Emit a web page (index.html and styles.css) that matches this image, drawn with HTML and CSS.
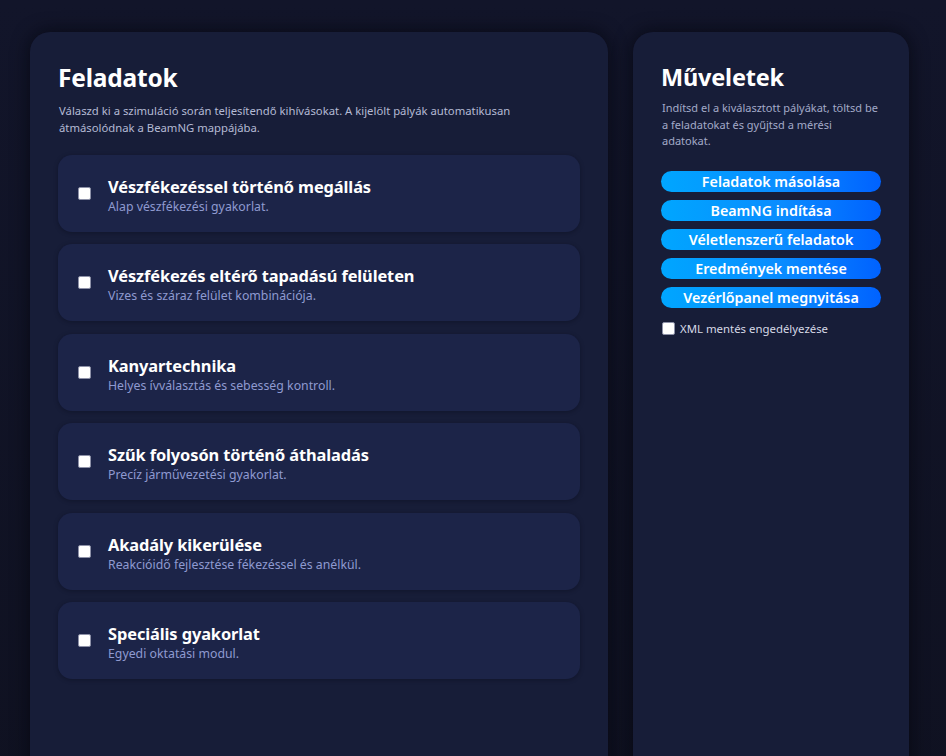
FILE: index.html
```html
<!DOCTYPE html>
<html lang="hu">

<head>
    <meta charset="utf-8">
    <meta name="viewport" content="width=device-width, initial-scale=1.0">
    <title>BeamNG feladatkezelő</title>
    <link rel="stylesheet" href="styles.css">
</head>

<body>
    <div class="layout">
        <section class="panel tasks">
            <h1>Feladatok</h1>
            <p class="lead">Válaszd ki a szimuláció során teljesítendő kihívásokat. A kijelölt pályák automatikusan átmásolódnak a BeamNG mappájába.</p>

            <label class="task">
                <input type="checkbox">
                <span class="task-text">
                    <span class="task-title">Vészfékezéssel történő megállás</span>
                    <span class="task-sub">Alap vészfékezési gyakorlat.</span>
                </span>
            </label>

            <label class="task">
                <input type="checkbox">
                <span class="task-text">
                    <span class="task-title">Vészfékezés eltérő tapadású felületen</span>
                    <span class="task-sub">Vizes és száraz felület kombinációja.</span>
                </span>
            </label>

            <label class="task">
                <input type="checkbox">
                <span class="task-text">
                    <span class="task-title">Kanyartechnika</span>
                    <span class="task-sub">Helyes ívválasztás és sebesség kontroll.</span>
                </span>
            </label>

            <label class="task">
                <input type="checkbox">
                <span class="task-text">
                    <span class="task-title">Szűk folyosón történő áthaladás</span>
                    <span class="task-sub">Precíz járművezetési gyakorlat.</span>
                </span>
            </label>

            <label class="task">
                <input type="checkbox">
                <span class="task-text">
                    <span class="task-title">Akadály kikerülése</span>
                    <span class="task-sub">Reakcióidő fejlesztése fékezéssel és anélkül.</span>
                </span>
            </label>

            <label class="task">
                <input type="checkbox">
                <span class="task-text">
                    <span class="task-title">Speciális gyakorlat</span>
                    <span class="task-sub">Egyedi oktatási modul.</span>
                </span>
            </label>
        </section>

        <aside class="panel actions">
            <h2>Műveletek</h2>
            <p class="lead">Indítsd el a kiválasztott pályákat, töltsd be a feladatokat és gyűjtsd a mérési adatokat.</p>

            <div class="buttons">
                <button>Feladatok másolása</button>
                <button>BeamNG indítása</button>
                <button>Véletlenszerű feladatok</button>
                <button>Eredmények mentése</button>
                <button>Vezérlőpanel megnyitása</button>
            </div>

            <label class="option">
                <input type="checkbox">
                <span>XML mentés engedélyezése</span>
            </label>
        </aside>
    </div>
</body>

</html>
```

FILE: styles.css
```css
:root {
    --page-bg: #11142a;
    --panel-bg: #171d38;
    --card-bg: #1c2448;
    --muted: #a3aac8;
    --sub: #8f9ad0;
}

html {
    background: var(--page-bg);
}

body {
    margin: 0;
    padding: 32px 31px 0 30px;
    font-family: 'Noto Sans', 'Open Sans', system-ui, sans-serif;
    color: #fff;
    background: linear-gradient(180deg, #12152a 0%, #0f1120 100%);
}

.layout {
    display: grid;
    grid-template-columns: 578px 276px;
    gap: 25px;
    align-items: start;
}

.panel {
    background: var(--panel-bg);
    border-radius: 20px;
    box-shadow: 0 0 18px rgba(4, 5, 14, 0.75);
    min-height: 780px;
    padding: 28px 28px 40px 28px;
}

h1,
h2 {
    margin: 0;
    font-weight: 700;
    letter-spacing: -0.2px;
}

h1 {
    font-size: 24.5px;
    line-height: 36px;
}

h2 {
    font-size: 23.5px;
    line-height: 34px;
}

.lead {
    margin: 7px 0 19px 1px;
    font-size: 11.3px;
    line-height: 16.5px;
    color: #b4bad4;
}

.actions .lead {
    margin: 6px 0 21px 1px;
    font-size: 11px;
    color: var(--muted);
}

.task {
    display: flex;
    align-items: center;
    gap: 17px;
    height: 77px;
    box-sizing: border-box;
    padding: 0 20px;
    margin-bottom: 12.4px;
    background: var(--card-bg);
    border-radius: 14px;
    box-shadow: 0 1px 4px rgba(6, 8, 20, 0.35);
    cursor: pointer;
}

.task input,
.option input {
    appearance: none;
    -webkit-appearance: none;
    width: 13px;
    height: 13px;
    margin: 0;
    background: #fff;
    border: 1px solid #8d91a8;
    border-radius: 2px;
    flex-shrink: 0;
}

.task-text {
    display: flex;
    flex-direction: column;
    margin-top: 5px;
}

.task-title {
    font-size: 16.4px;
    font-weight: 700;
    line-height: 22px;
    letter-spacing: -0.1px;
}

.task-sub {
    font-size: 12.3px;
    line-height: 18px;
    color: var(--sub);
}

.buttons {
    display: flex;
    flex-direction: column;
    gap: 8px;
    width: 220px;
}

button {
    height: 21px;
    padding: 0;
    border: none;
    border-radius: 11px;
    background: linear-gradient(90deg, #00a6ff 0%, #0a8cff 55%, #0062ff 100%);
    color: #fff;
    font-family: inherit;
    font-size: 14.3px;
    font-weight: 600;
    line-height: 21px;
    cursor: pointer;
}

.option {
    display: flex;
    align-items: center;
    gap: 5px;
    margin-top: 13px;
    margin-left: 1px;
    font-size: 11.4px;
    color: #d6d9e6;
}
```
